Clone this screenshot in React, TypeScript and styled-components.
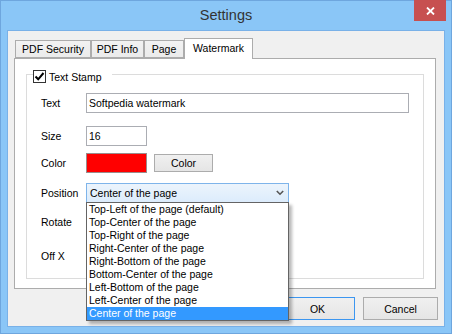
import React from 'react';
import styled, { createGlobalStyle } from 'styled-components';

const Global = createGlobalStyle`
  html, body { margin: 0; padding: 0; background: #8ac6f7; }
  body { font-family: "Liberation Sans", Arial, sans-serif; font-size: 10.5px; color: #000; }
  * { box-sizing: border-box; }
`;

const Window = styled.div`
  width: 452px;
  height: 334px;
  background: #8ac6f7;
  border: 1px solid #6ea6de;
  display: flex;
  flex-direction: column;
`;

const TitleBar = styled.div`
  height: 29px;
  flex: none;
  display: grid;
  grid-template-columns: 1fr auto 1fr;
  align-items: start;
`;

const Title = styled.div`
  grid-column: 2;
  line-height: 28px;
  font-size: 14.5px;
  color: #333;
`;

const CloseButton = styled.div`
  grid-column: 3;
  justify-self: end;
  margin: -1px 5px 0 0;
  width: 32px;
  height: 21px;
  background: #c75050;
  display: flex;
  align-items: center;
  justify-content: center;
`;

const Client = styled.div`
  flex: 1;
  margin: 0 6px 6px 6px;
  background: #f0f0f0;
  border: 1px solid #79b1e8;
  display: flex;
  flex-direction: column;
`;

const TabControl = styled.div`
  margin: 7px 8px 0 6px;
  display: flex;
  flex-direction: column;
`;

const TabStrip = styled.div`
  height: 20px;
  display: flex;
  align-items: flex-end;
  padding-left: 1px;
  position: relative;
  z-index: 1;
`;

const Tab = styled.div<{ $w: number; $active?: boolean }>`
  width: ${p => p.$w}px;
  height: ${p => (p.$active ? 21 : 18)}px;
  margin-bottom: ${p => (p.$active ? -1 : 0)}px;
  margin-left: ${p => (p.$active ? 0 : 0)}px;
  border: 1px solid #acacac;
  border-bottom: ${p => (p.$active ? 'none' : '1px solid #acacac')};
  background: ${p => (p.$active ? '#ffffff' : 'linear-gradient(#f2f2f2, #ebebeb)')};
  display: flex;
  align-items: center;
  justify-content: center;
  padding-bottom: ${p => (p.$active ? 3 : 0)}px;
  white-space: nowrap;
`;

const Pane = styled.div`
  height: 231px;
  background: #fff;
  border: 1px solid #acacac;
  padding: 15px 11px 9px 11px;
  display: flex;
  flex-direction: column;
`;

const GroupBox = styled.div`
  flex: 1;
  border: 1px solid #dcdcdc;
  display: flex;
  flex-direction: column;
`;

const Legend = styled.div`
  margin: -5px 0 0 6px;
  padding: 0 10px 0 0;
  height: 13px;
  width: fit-content;
  background: #fff;
  display: flex;
  align-items: center;
  gap: 3px;
`;

const CheckBox = styled.div`
  width: 13px;
  height: 13px;
  border: 1px solid #333;
  background: #fff;
  display: flex;
  align-items: center;
  justify-content: center;
`;

const Row = styled.div<{ $top: number }>`
  margin-top: ${p => p.$top}px;
  height: 20px;
  padding-left: 14px;
  display: flex;
  align-items: center;
`;

const Label = styled.div`
  width: 45px;
  flex: none;
`;

const TextBox = styled.div<{ $w: number }>`
  width: ${p => p.$w}px;
  height: 20px;
  border: 1px solid #abadb3;
  background: #fff;
  padding-left: 2px;
  display: flex;
  align-items: center;
  white-space: nowrap;
`;

const Swatch = styled.div<{ $color: string }>`
  width: 61px;
  height: 20px;
  border: 1px solid #9a8c8c;
  background: ${p => p.$color};
`;

const Button = styled.div<{ $w: number; $h: number; $default?: boolean }>`
  width: ${p => p.$w}px;
  height: ${p => p.$h}px;
  margin-left: ${p => (p.$default === undefined ? 0 : 0)}px;
  border: 1px solid ${p => (p.$default ? '#3c96f0' : '#acacac')};
  background: linear-gradient(#f0f0f0, #e5e5e5);
  display: flex;
  align-items: center;
  justify-content: center;
`;

const ColorButton = styled(Button)`
  margin-left: 7px;
`;

const SelectWrap = styled.div`
  position: relative;
  width: 203px;
  height: 20px;
`;

const Select = styled.div`
  height: 20px;
  border: 1px solid #7eb4ea;
  background: linear-gradient(#ecf4fc, #dcecfc);
  padding: 0 4px 0 3px;
  display: flex;
  align-items: center;
  justify-content: space-between;
`;

const DropList = styled.div`
  position: absolute;
  top: 19px;
  left: 0;
  width: 203px;
  border: 1px solid #646464;
  background: #fff;
  z-index: 10;
  box-shadow: 3px 3px 3px rgba(0, 0, 0, 0.28);
`;

const Option = styled.div<{ $selected?: boolean }>`
  height: 13px;
  line-height: 13px;
  padding-left: 2px;
  white-space: nowrap;
  background: ${p => (p.$selected ? '#3399ff' : 'transparent')};
  color: ${p => (p.$selected ? '#fff' : '#000')};
`;

const ButtonBar = styled.div`
  margin-top: 8px;
  padding-right: 6px;
  display: flex;
  justify-content: flex-end;
  gap: 8px;
`;

const options = [
  'Top-Left of the page (default)',
  'Top-Center of the page',
  'Top-Right of the page',
  'Right-Center of the page',
  'Right-Bottom of the page',
  'Bottom-Center of the page',
  'Left-Bottom of the page',
  'Left-Center of the page',
  'Center of the page',
];

export default function App() {
  return (
    <>
      <Global />
      <Window>
        <TitleBar>
          <Title>Settings</Title>
          <CloseButton>
            <svg width="9" height="8" viewBox="0 0 9 8">
              <path d="M1 0.5 L8 7.5 M8 0.5 L1 7.5" stroke="#fff" strokeWidth="1.8" />
            </svg>
          </CloseButton>
        </TitleBar>
        <Client>
          <TabControl>
            <TabStrip>
              <Tab $w={76}>PDF Security</Tab>
              <Tab $w={53}>PDF Info</Tab>
              <Tab $w={40}>Page</Tab>
              <Tab $w={69} $active>Watermark</Tab>
            </TabStrip>
            <Pane>
              <GroupBox>
                <Legend>
                  <CheckBox>
                    <svg width="11" height="11" viewBox="0 0 11 11">
                      <path d="M1.5 5.5 L4.2 8.3 L9.5 2" fill="none" stroke="#000" strokeWidth="2" />
                    </svg>
                  </CheckBox>
                  <span>Text Stamp</span>
                </Legend>
                <Row $top={10}>
                  <Label>Text</Label>
                  <TextBox $w={323}>Softpedia watermark</TextBox>
                </Row>
                <Row $top={13}>
                  <Label>Size</Label>
                  <TextBox $w={61}>16</TextBox>
                </Row>
                <Row $top={7}>
                  <Label>Color</Label>
                  <Swatch $color="#ff0000" />
                  <ColorButton $w={59} $h={18}>Color</ColorButton>
                </Row>
                <Row $top={10}>
                  <Label>Position</Label>
                  <SelectWrap>
                    <Select>
                      <span>Center of the page</span>
                      <svg width="8" height="6" viewBox="0 0 8 6">
                        <path d="M0.8 1 L4 4.2 L7.2 1" fill="none" stroke="#555" strokeWidth="1.6" />
                      </svg>
                    </Select>
                    <DropList>
                      {options.map((o, i) => (
                        <Option key={o} $selected={i === options.length - 1}>{o}</Option>
                      ))}
                    </DropList>
                  </SelectWrap>
                </Row>
                <Row $top={9}>
                  <Label>Rotate</Label>
                </Row>
                <Row $top={14}>
                  <Label>Off X</Label>
                </Row>
              </GroupBox>
            </Pane>
          </TabControl>
          <ButtonBar>
            <Button $w={75} $h={23} $default>OK</Button>
            <Button $w={75} $h={23}>Cancel</Button>
          </ButtonBar>
        </Client>
      </Window>
    </>
  );
}
